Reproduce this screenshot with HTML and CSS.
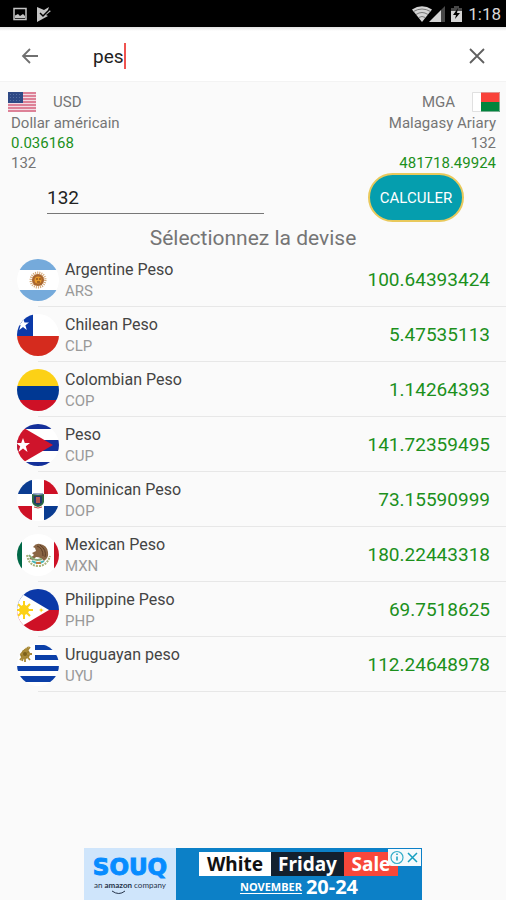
FILE: index.html
```html
<!DOCTYPE html>
<html lang="fr">
<head>
  <meta charset="UTF-8">
  <meta name="viewport" content="width=device-width, initial-scale=1.0">
  <title>Convertisseur de devises</title>
  <link rel="stylesheet" href="styles.css">
</head>
<body>
  <div class="status-bar">
    <svg class="status-icon" width="16" height="16" viewBox="0 0 16 16">
      <path d="M2 2.500h12v11H2z" fill="none" stroke="#c4c4c4" stroke-width="1.500"/>
      <path d="M3 12V9.500l3-1.500 2 2 3-2 2 2V12z" fill="#c4c4c4"/>
    </svg>
    <svg class="status-icon" width="16" height="16" viewBox="0 0 16 16">
      <path d="M1 1l7 3 5-3-1 3 3 1-5 4 2 1L1 16z" fill="#c4c4c4"/>
      <path d="M4 7l3 3 6-6" fill="none" stroke="#000" stroke-width="1.500"/>
    </svg>
    <span class="spacer"></span>
    <svg class="signal-icons" width="52" height="18" viewBox="0 0 52 18">
      <path d="M0 4.500Q10 -2 20 4.500L10 17z" fill="#d4d4d4"/>
      <path d="M1.500 6.500q8.500-5 17 0M4 9.500q6-4 12 0M6.500 12.500q3.500-2 7 0" fill="none" stroke="#777" stroke-width="1"/>
      <path d="M17 17L29 5v12z" fill="#d4d4d4"/>
      <path d="M29 5l4-4v16h-4z" fill="#484848"/>
      <path d="M39 3h3V1h5v2h3v4H39z" fill="#484848"/>
      <path d="M39 6h11v11H39z" fill="#d4d4d4"/>
      <path d="M46 3l-5 7h3l-1 4 5-6h-3z" fill="#000"/>
    </svg>
    <span class="clock">1:18</span>
  </div>

  <header class="search-bar">
    <button class="icon-button" aria-label="Retour">
      <svg width="20" height="20" viewBox="0 0 20 20"><path d="M18 10H3M10 3L3 10l7 7" fill="none" stroke="#707070" stroke-width="1.800"/></svg>
    </button>
    <div class="search-field">
      <input id="search" class="search-input" type="text" value="pes" aria-label="Rechercher">
      <span class="caret"></span>
    </div>
    <button class="icon-button" aria-label="Effacer">
      <svg width="20" height="20" viewBox="0 0 20 20"><path d="M3 3l14 14M17 3L3 17" fill="none" stroke="#606060" stroke-width="1.800"/></svg>
    </button>
  </header>

  <main>
    <section class="pair">
      <div class="currency">
        <div class="code-line">
          <svg width="28" height="20" viewBox="0 0 28 20">
            <path d="M0 0h28v20H0z" fill="#f3dce4"/>
            <path d="M0 1h28M0 4h28M0 7h28M0 10h28M0 13h28M0 16h28M0 19h28" stroke="#d6637d" stroke-width="1.600"/>
            <path d="M0 0h15v11H0z" fill="#2f4a86"/>
            <path d="M2 2.500h12M2 5.500h12M2 8.500h12" stroke="#566fa3" stroke-width="1" stroke-dasharray="1 2"/>
          </svg>
          <span>USD</span>
        </div>
        <div class="detail">Dollar américain</div>
        <div class="detail green">0.036168</div>
        <div class="detail">132</div>
      </div>
      <div class="currency right">
        <div class="code-line">
          <span>MGA</span>
          <svg width="28" height="20" viewBox="0 0 28 20">
            <path d="M0 0h28v20H0z" fill="#fff"/>
            <path d="M9 0h19v10H9z" fill="#f9423a"/>
            <path d="M9 10h19v10H9z" fill="#00843d"/>
            <path d="M0.500 0.500h27v19h-27z" fill="none" stroke="#ccc" stroke-opacity="0.600"/>
          </svg>
        </div>
        <div class="detail">Malagasy Ariary</div>
        <div class="detail">132</div>
        <div class="detail green">481718.49924</div>
      </div>
    </section>

    <form class="amount-form">
      <input class="amount" type="text" value="132" aria-label="Montant">
      <button class="calculate" type="button">CALCULER</button>
    </form>

    <h1 class="title">Sélectionnez la devise</h1>

    <ul class="list">
      <li class="row">
        <svg class="flag" viewBox="0 0 42 42">
          <path d="M0 0h42v42H0z" fill="#fff"/>
          <path d="M0 0h42v11H0zM0 31h42v11H0z" fill="#75aadb"/>
          <circle cx="21" cy="21" r="7" fill="none" stroke="#d5a878" stroke-width="3" stroke-dasharray="1 1"/>
          <circle cx="21" cy="21" r="6" fill="#a9662e"/>
          <circle cx="21" cy="21" r="3.500" fill="#e89a2c"/>
          <path d="M19 20h2M22 20h2M20 23h3" stroke="#6b3515"/>
        </svg>
        <div class="info"><div class="name">Argentine Peso</div><div class="code">ARS</div></div>
        <div class="value">100.64393424</div>
      </li>
      <li class="row">
        <svg class="flag" viewBox="0 0 42 42">
          <path d="M0 0h42v22H0z" fill="#fff"/>
          <path d="M0 0h16v22H0z" fill="#0b39a8"/>
          <path d="M0 22h42v20H0z" fill="#d52b1e"/>
          <path d="M6 4l1.500 4.500H12l-3.600 2.800L9.800 16 6 13l-3.800 3 1.400-4.700L0 8.500h4.500z" fill="#fff"/>
        </svg>
        <div class="info"><div class="name">Chilean Peso</div><div class="code">CLP</div></div>
        <div class="value">5.47535113</div>
      </li>
      <li class="row">
        <svg class="flag" viewBox="0 0 42 42">
          <path d="M0 0h42v17H0z" fill="#fcd116"/>
          <path d="M0 17h42v14H0z" fill="#003893"/>
          <path d="M0 31h42v11H0z" fill="#ce1126"/>
        </svg>
        <div class="info"><div class="name">Colombian Peso</div><div class="code">COP</div></div>
        <div class="value">1.14264393</div>
      </li>
      <li class="row">
        <svg class="flag" viewBox="0 0 42 42">
          <path d="M0 0h42v42H0z" fill="#fff"/>
          <path d="M0 0h42v5H0zM0 16h42v11H0zM0 38h42v4H0z" fill="#14309a"/>
          <path d="M0 0l36 21L0 42z" fill="#cf142b"/>
          <path d="M6 14l1.800 5H13l-4.200 3.300L10.500 28 6 24.500 1.500 28l1.700-5.700L-1 19h5.200z" fill="#fff"/>
        </svg>
        <div class="info"><div class="name">Peso</div><div class="code">CUP</div></div>
        <div class="value">141.72359495</div>
      </li>
      <li class="row">
        <svg class="flag" viewBox="0 0 42 42">
          <path d="M0 0h42v42H0z" fill="#fff"/>
          <path d="M0 0h15v15H0zM27 27h15v15H27z" fill="#0a3c91"/>
          <path d="M27 0h15v15H27zM0 27h15v15H0z" fill="#ce1126"/>
          <path d="M15 15l6 1 6-1v8q-1 4-6 5-5-1-6-5z" fill="#2c6a43"/>
          <path d="M17 17h8v7l-4 2-4-2z" fill="#23376a"/>
          <path d="M19 18h4v6h-4z" fill="#b65450"/>
          <path d="M16 15h10" stroke="#385695"/>
          <path d="M17 28q4 2 8 0" fill="none" stroke="#c04a42"/>
        </svg>
        <div class="info"><div class="name">Dominican Peso</div><div class="code">DOP</div></div>
        <div class="value">73.15590999</div>
      </li>
      <li class="row">
        <svg class="flag" viewBox="0 0 42 42">
          <path d="M0 0h42v42H0z" fill="#fff"/>
          <path d="M0 0h5v42H0z" fill="#006847"/>
          <path d="M37 0h5v42h-5z" fill="#ce1126"/>
          <path d="M10 21q2 11 11 11t12-10" fill="none" stroke="#a7b27a" stroke-width="2" stroke-dasharray="2 1"/>
          <path d="M16 13q3-4 7-3 7 1 8 8 1 6-4 9-3-4-8-4l-3 3-4-1 5-4-2-2 4-2-1-3z" fill="#8a6645"/>
          <path d="M20 12q6 2 6 10M23 11q7 5 5 12" fill="none" stroke="#5c3d27"/>
          <path d="M12 21q5 7 13 4" fill="none" stroke="#86aa76" stroke-width="2"/>
          <path d="M15 27q6 4 12 0" fill="none" stroke="#46b4b5" stroke-width="2"/>
          <path d="M19 29h5" stroke="#c77c3f" stroke-width="2"/>
        </svg>
        <div class="info"><div class="name">Mexican Peso</div><div class="code">MXN</div></div>
        <div class="value">180.22443318</div>
      </li>
      <li class="row">
        <svg class="flag" viewBox="0 0 42 42">
          <path d="M0 0h42v21H0z" fill="#0b39a8"/>
          <path d="M0 21h42v21H0z" fill="#ce1126"/>
          <path d="M0 2l32 19L0 40z" fill="#fff"/>
          <circle cx="7" cy="21" r="5" fill="#fcd116"/>
          <path d="M7 12v18M-2 21h18M1 15l12 12M13 15L1 27" stroke="#fcd116" stroke-width="2"/>
          <path d="M24 19l1 1.500 2 .5-2 .8-1 1.700-.6-2-1.600-.5 1.600-.6z" fill="#fcd116"/>
        </svg>
        <div class="info"><div class="name">Philippine Peso</div><div class="code">PHP</div></div>
        <div class="value">69.7518625</div>
      </li>
      <li class="row">
        <svg class="flag" viewBox="0 0 42 42">
          <path d="M0 0h42v42H0z" fill="#fff"/>
          <path d="M18 1h24v5H18zM18 11h24v5H18zM0 22h42v5H0zM0 32h42v6H0z" fill="#0b3fa8"/>
          <circle cx="8" cy="10" r="5" fill="#9a7b29"/>
          <path d="M8 2v16M1 10h14M3 4l10 12M13 3L3 16M11 2L5 17" stroke="#a98a38" stroke-width="1.800"/>
          <circle cx="8" cy="10" r="2" fill="#7d611c"/>
        </svg>
        <div class="info"><div class="name">Uruguayan peso</div><div class="code">UYU</div></div>
        <div class="value">112.24648978</div>
      </li>
    </ul>
  </main>

  <a class="ad" href="#">
    <div class="ad-brand">
      <div class="brand-name">SOUQ</div>
      <div class="brand-sub"><span>an</span><b>amazon</b><span>company</span></div>
      <svg class="smile" width="16" height="5" viewBox="0 0 16 5"><path d="M1 1q7 5 13 0" fill="none" stroke="#26344a"/></svg>
    </div>
    <div class="ad-text">
      <div class="words"><span class="white">White</span><span class="friday">Friday</span><span class="sale">Sale</span></div>
      <div class="dates"><span class="month">NOVEMBER</span><span>20-24</span></div>
    </div>
    <svg class="ad-choices" width="33" height="17" viewBox="0 0 33 17">
      <path d="M0 0h33v17H4q-4 0-4-4z" fill="#f5fafc"/>
      <circle cx="9" cy="8.500" r="6" fill="none" stroke="#35adc9" stroke-width="1.200"/>
      <path d="M9 7.500v4M9 4.500v1.500M20 4l9 9M29 4l-9 9" fill="none" stroke="#159fc0" stroke-width="1.500"/>
    </svg>
  </a>
</body>
</html>
```
FILE: styles.css
```css
* {
  box-sizing: border-box;
}

body {
  margin: 0;
  min-height: 100vh;
  display: flex;
  flex-direction: column;
  background: #fafafa;
  color: #757575;
  font-family: Roboto, "Liberation Sans", sans-serif;
}

button,
input {
  font-family: inherit;
  border: none;
  background: none;
  padding: 0;
  outline: none;
}

svg {
  display: block;
}

/* Phone status bar */
.status-bar {
  display: flex;
  align-items: center;
  gap: 8px;
  height: 27px;
  padding: 0 5px 0 12px;
  background: #000;
}

.spacer {
  flex: 1;
}

.signal-icons {
  margin-right: -4px;
}

.clock {
  color: #d8d8d8;
  font-size: 17px;
}

/* Search */
.search-bar {
  display: flex;
  align-items: center;
  height: 55px;
  padding: 4px 19px 0 20px;
  background: linear-gradient(#e2e2e2, #fff 4px);
  border-bottom: 1px solid #f3f3f3;
}

.icon-button {
  width: 20px;
  height: 20px;
  cursor: pointer;
}

.search-field {
  flex: 1;
  display: flex;
  align-items: center;
  padding-left: 53px;
}

.search-input {
  field-sizing: content;
  color: #222;
  font-size: 19px;
}

.caret {
  width: 2px;
  height: 26px;
  background: #ef5350;
}

/* Selected currencies */
.pair {
  display: flex;
  justify-content: space-between;
  padding: 9px 6px 0 8px;
}

.code-line {
  display: flex;
  align-items: center;
  gap: 17px;
  height: 22px;
  font-size: 15px;
}

.detail {
  padding: 0 4px 0 3px;
  font-size: 15px;
  line-height: 20px;
}

.right {
  text-align: right;
}

.right .code-line {
  justify-content: flex-end;
}

.green {
  color: #1c901c;
}

.amount-form {
  display: flex;
  align-items: center;
  justify-content: space-between;
  padding: 0 42px 0 47px;
}

.amount {
  width: 52%;
  height: 32px;
  color: #222;
  font-size: 19px;
  border-bottom: 1px solid #777;
}

.calculate {
  width: 96px;
  height: 49px;
  border: 2px solid #e9c95c;
  border-radius: 25px;
  background: #059eae;
  color: #fff;
  font-size: 15px;
  cursor: pointer;
}

.title {
  margin: 3px 0 0;
  font-size: 21px;
  font-weight: 400;
  line-height: 27px;
  text-align: center;
}

/* Results */
.list {
  margin: 0;
  padding: 0;
  list-style: none;
}

.row {
  position: relative;
  display: flex;
  align-items: center;
  height: 55px;
  padding: 0 16px 0 17px;
}

.row::after {
  content: "";
  position: absolute;
  left: 38px;
  right: 0;
  bottom: 0;
  height: 1px;
  background: #e7e7e7;
}

.flag {
  width: 42px;
  height: 42px;
  border-radius: 50%;
}

.info {
  flex: 1;
  padding-left: 6px;
}

.name {
  color: #444;
  font-size: 16px;
  line-height: 22px;
}

.code {
  color: #999;
  font-size: 15px;
  line-height: 20px;
}

.value {
  color: #1c901c;
  font-size: 19px;
}

/* Banner */
.ad {
  position: relative;
  display: flex;
  width: 338px;
  height: 52px;
  margin: auto auto 0;
  background: #0c80c7;
  color: #fff;
  font-family: "Noto Sans", sans-serif;
  text-decoration: none;
}

.ad-brand {
  position: relative;
  width: 92px;
  padding-top: 6px;
  background: #cfe5fb;
  text-align: center;
}

.brand-name {
  color: #078cff;
  font-family: "DejaVu Sans", sans-serif;
  font-size: 23px;
  font-weight: 700;
  line-height: 26px;
  -webkit-text-stroke: 1px #078cff;
}

.brand-sub {
  display: flex;
  justify-content: center;
  gap: 2px;
  color: #26344a;
  font-family: Lato, sans-serif;
  font-size: 8px;
  line-height: 10px;
}

.smile {
  position: absolute;
  left: 27px;
  bottom: 5px;
}

.ad-text {
  flex: 1;
  padding-top: 4px;
}

.words {
  display: flex;
  margin-left: 23px;
  font-size: 19px;
  font-weight: 700;
  line-height: 24px;
  text-align: center;
}

.white {
  width: 72px;
  background: #fff;
  color: #111;
}

.friday {
  width: 73px;
  background: #13202e;
}

.sale {
  width: 54px;
  background: #f8473a;
}

.dates {
  display: flex;
  align-items: center;
  justify-content: center;
  gap: 4px;
  font-size: 20px;
  font-weight: 700;
  line-height: 22px;
}

.month {
  border-bottom: 1px solid #fff;
  font-size: 11px;
  line-height: 12px;
}

.ad-choices {
  position: absolute;
  top: 1px;
  right: 1px;
}
```
